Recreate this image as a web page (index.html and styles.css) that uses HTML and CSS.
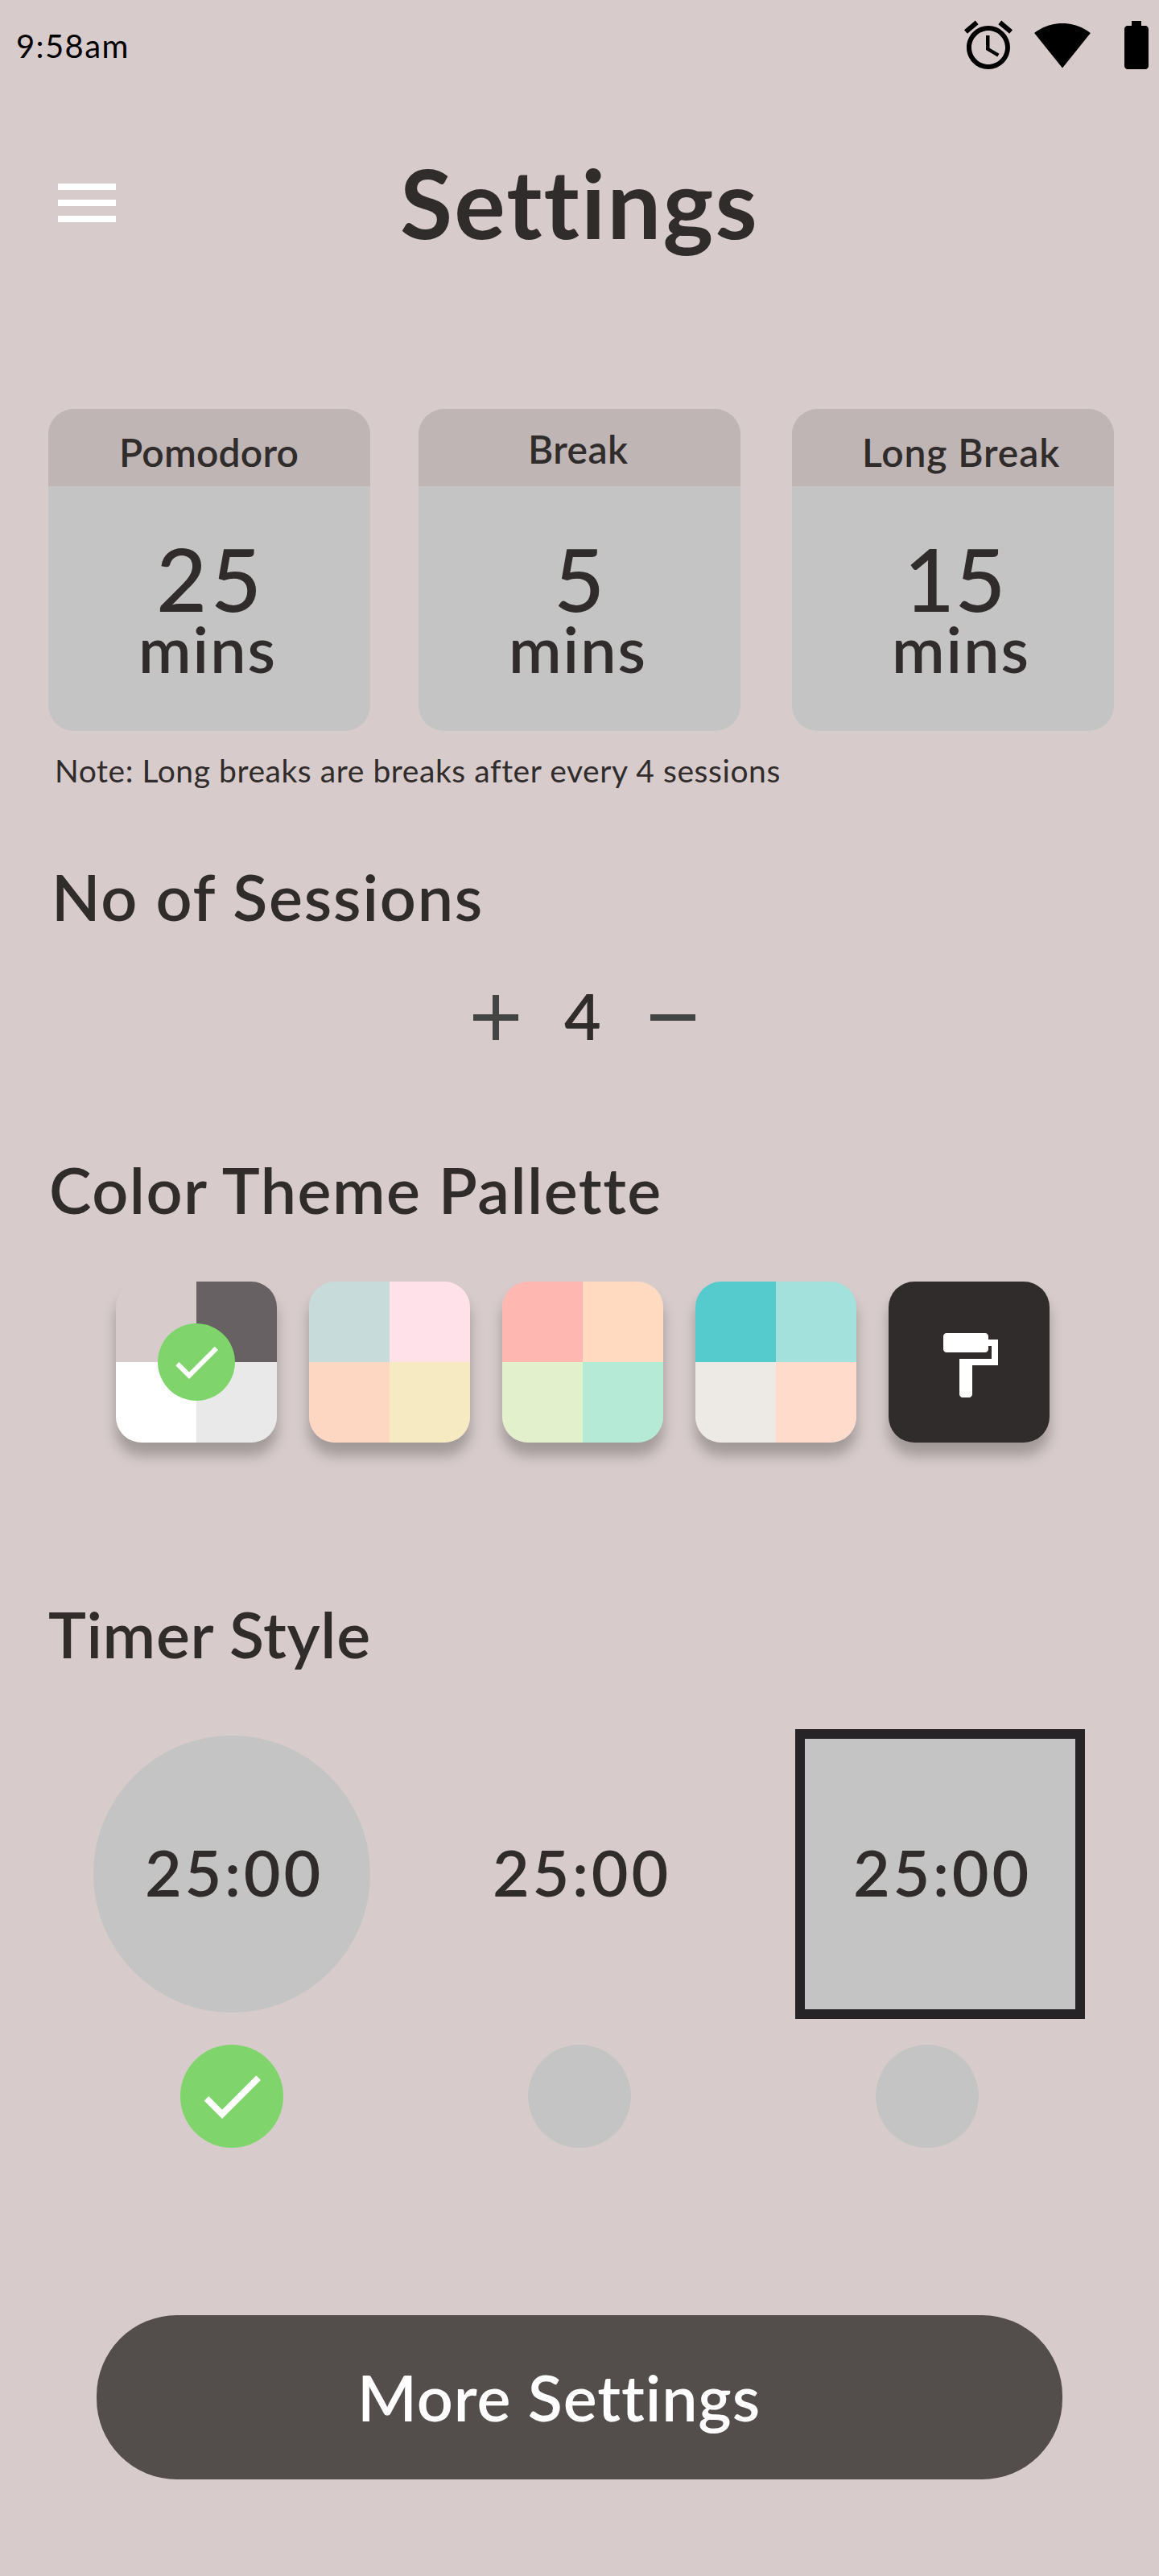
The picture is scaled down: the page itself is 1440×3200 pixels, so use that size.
FILE: index.html
```html
<!DOCTYPE html>
<html lang="en">
<head>
<meta charset="utf-8">
<title>Settings</title>
<link rel="stylesheet" href="styles.css">
</head>
<body>
<div class="screen">
  <div class="status-bar">
    <span class="status-time">9:58am</span>
    <div class="status-icons">
      <svg width="72" height="72" viewBox="0 0 24 24"><path d="M22 5.72l-4.6-3.86-1.29 1.53 4.6 3.86L22 5.72zM7.88 3.39L6.6 1.86 2 5.71l1.29 1.53 4.59-3.85zM12.5 8H11v6l4.75 2.85.75-1.23-4-2.37V8zM12 4c-4.97 0-9 4.03-9 9s4.02 9 9 9a9 9 0 0 0 0-18zm0 16c-3.87 0-7-3.13-7-7s3.13-7 7-7 7 3.13 7 7-3.13 7-7 7z"/></svg>
      <svg width="72" height="72" viewBox="0 0 24 24"><path d="M12.01 21.49L23.64 7c-.45-.34-4.93-4-11.64-4C5.28 3 .81 6.66.36 7l11.63 14.49.01.01.01-.01z"/></svg>
      <svg width="60" height="72" viewBox="0 0 20 24"><path d="M15.67 4H14V2h-4v2H8.33C7.6 4 7 4.6 7 5.33v15.33C7 21.4 7.6 22 8.33 22h7.33c.74 0 1.34-.6 1.34-1.33V5.33C17 4.6 16.4 4 15.67 4z"/></svg>
    </div>
  </div>

  <header class="header">
    <svg class="menu" width="72" height="48" viewBox="0 0 72 48"><path fill="#fff" d="M0 0h72v8H0zM0 20h72v8H0zM0 40h72v8H0z"/></svg>
    <h1 class="title">Settings</h1>
  </header>

  <section class="durations">
    <article class="card card-pomodoro">
      <div class="card-head">Pomodoro</div>
      <div class="card-value">25</div>
      <div class="card-unit">mins</div>
    </article>
    <article class="card card-break">
      <div class="card-head">Break</div>
      <div class="card-value">5</div>
      <div class="card-unit">mins</div>
    </article>
    <article class="card card-long">
      <div class="card-head">Long Break</div>
      <div class="card-value">15</div>
      <div class="card-unit">mins</div>
    </article>
  </section>
  <p class="note">Note: Long breaks are breaks after every 4 sessions</p>

  <h2 class="heading heading-sessions">No of Sessions</h2>
  <div class="counter">
    <svg class="counter-icon" width="56" height="56" viewBox="0 0 56 56"><path fill="#434545" d="M24 0h8v24h24v8H32v24h-8V32H0v-8h24z"/></svg>
    <span class="counter-value">4</span>
    <svg class="counter-icon" width="56" height="56" viewBox="0 0 56 56"><path fill="#434545" d="M0 24h56v8H0z"/></svg>
  </div>

  <h2 class="heading heading-palette">Color Theme Pallette</h2>
  <div class="palettes">
    <div class="palette">
      <i class="c-rose"></i><i class="c-slate"></i><i class="c-white"></i><i class="c-mist"></i>
      <span class="palette-check"><svg width="72" height="72" viewBox="0 0 24 24"><path fill="#fff" d="M9 16.17L4.83 12l-1.42 1.41L9 19 21 7l-1.41-1.41z"/></svg></span>
    </div>
    <div class="palette"><i class="c-ice"></i><i class="c-pink"></i><i class="c-apricot"></i><i class="c-butter"></i></div>
    <div class="palette"><i class="c-coral"></i><i class="c-peach"></i><i class="c-lime"></i><i class="c-mint"></i></div>
    <div class="palette"><i class="c-teal"></i><i class="c-aqua"></i><i class="c-bone"></i><i class="c-blush"></i></div>
    <div class="palette palette-custom">
      <svg width="96" height="96" viewBox="0 0 24 24"><path fill="#fff" d="M18 4V3c0-.55-.45-1-1-1H5c-.55 0-1 .45-1 1v4c0 .55.45 1 1 1h12c.55 0 1-.45 1-1V6h1v4H9v11c0 .55.45 1 1 1h2c.55 0 1-.45 1-1v-9h8V4h-3z"/></svg>
    </div>
  </div>

  <h2 class="heading heading-timer">Timer Style</h2>
  <div class="timers">
    <div class="timer">
      <div class="face face-round">25:00</div>
      <span class="radio radio-on"><svg width="96" height="96" viewBox="0 0 24 24"><path fill="#fff" d="M9 16.17L4.83 12l-1.42 1.41L9 19 21 7l-1.41-1.41z"/></svg></span>
    </div>
    <div class="timer">
      <div class="face">25:00</div>
      <span class="radio"></span>
    </div>
    <div class="timer">
      <div class="face face-square">25:00</div>
      <span class="radio"></span>
    </div>
  </div>

  <button class="more" type="button">More Settings</button>
</div>
</body>
</html>
```
FILE: styles.css
```css
* { box-sizing: border-box; }

body {
  margin: 0;
  background: #d7cbcb;
  color: #312c2c;
  font-family: Lato, "Open Sans", sans-serif;
  font-weight: 600;
}

h1, h2, p { margin: 0; }
svg { display: block; flex: none; }

.screen {
  display: flex;
  flex-direction: column;
  width: 1440px;
  height: 3200px;
}

/* Status bar */
.status-bar {
  display: flex;
  justify-content: space-between;
  height: 112px;
  padding: 20px 4px 0 20px;
  color: #000;
}
.status-time {
  margin-top: 13px;
  font-size: 40px;
  font-weight: 400;
  line-height: 48px;
  letter-spacing: 1.4px;
}
.status-icons { display: flex; gap: 20px; }

/* Header */
.header {
  display: flex;
  align-items: center;
  gap: 353px;
  height: 144px;
  margin-top: 67px;
  padding-left: 72px;
}
.menu { margin-top: 2px; }
.title {
  font-size: 119px;
  font-weight: 700;
  line-height: 144px;
  letter-spacing: 2.1px;
}

/* Duration cards */
.durations {
  display: flex;
  gap: 60px;
  margin: 185px 0 0 60px;
}
.card {
  width: 400px;
  height: 400px;
  border-radius: 32px;
  background: #c4c4c4;
  overflow: hidden;
}
.card-head {
  height: 96px;
  padding-top: 26px;
  background: #bfb5b4;
  font-size: 48px;
  line-height: 56px;
}
.card-value {
  margin-top: 64px;
  font-size: 109px;
  font-weight: 500;
  line-height: 100px;
}
.card-unit {
  font-size: 79px;
  line-height: 76px;
  letter-spacing: 2px;
}
.card-pomodoro .card-head { padding-left: 88px; letter-spacing: 0.2px; }
.card-pomodoro .card-value { padding-left: 134px; letter-spacing: 4.5px; }
.card-pomodoro .card-unit { padding-left: 112px; }
.card-break .card-head { padding: 22px 0 0 136px; letter-spacing: 0.4px; }
.card-break .card-value { padding-left: 168px; }
.card-break .card-unit { padding-left: 112px; }
.card-long { margin-left: 4px; }
.card-long .card-head { padding-left: 87px; letter-spacing: 0.9px; }
.card-long .card-value { padding-left: 139px; }
.card-long .card-unit { padding-left: 124px; }

.note {
  margin: 25px 0 0 68px;
  font-size: 39px;
  font-weight: 400;
  line-height: 48px;
  letter-spacing: 0.56px;
}

/* Section headings */
.heading {
  font-size: 79px;
  font-weight: 600;
  line-height: 96px;
}
.heading-sessions { margin: 85px 0 0 64px; letter-spacing: 1.8px; }
.heading-palette { margin: 120px 0 0 61px; letter-spacing: 1.5px; }
.heading-timer { margin: 190px 0 0 60px; letter-spacing: 0.65px; }

/* Session counter */
.counter {
  display: flex;
  align-items: center;
  height: 96px;
  margin: 52px 0 0 588px;
}
.counter-icon { margin-top: 4px; }
.counter-value {
  width: 164px;
  padding-left: 57px;
  font-size: 79px;
  line-height: 96px;
}

/* Theme palettes */
.palettes {
  display: flex;
  gap: 40px;
  margin: 66px 0 0 144px;
}
.palette {
  position: relative;
  display: grid;
  grid-template-columns: 100px 100px;
  grid-template-rows: 100px 100px;
  width: 200px;
  height: 200px;
  border-radius: 32px;
  box-shadow: 0 16px 16px rgba(0, 0, 0, 0.25);
}
.palette i:nth-child(1) { border-top-left-radius: 32px; }
.palette i:nth-child(2) { border-top-right-radius: 32px; }
.palette i:nth-child(3) { border-bottom-left-radius: 32px; }
.palette i:nth-child(4) { border-bottom-right-radius: 32px; }
.palette-check {
  position: absolute;
  top: 52px;
  left: 52px;
  display: grid;
  place-items: center;
  width: 96px;
  height: 96px;
  border-radius: 50%;
  background: #7fd56b;
}
.palette-custom {
  grid-template: 1fr / 1fr;
  place-items: center;
  padding-top: 8px;
  background: #312c2c;
}
.c-rose { background: #d7cbcb; }
.c-slate { background: #686163; }
.c-white { background: #fff; }
.c-mist { background: #e9e9e9; }
.c-ice { background: #c7dbda; }
.c-pink { background: #ffe1e9; }
.c-apricot { background: #fdd7c2; }
.c-butter { background: #f6eac2; }
.c-coral { background: #ffb7b2; }
.c-peach { background: #ffdac1; }
.c-lime { background: #e2f0cb; }
.c-mint { background: #b5ead7; }
.c-teal { background: #55cbcd; }
.c-aqua { background: #a3e1dc; }
.c-bone { background: #edeae5; }
.c-blush { background: #ffdbcc; }

/* Timer styles */
.timers {
  display: grid;
  grid-template-columns: repeat(3, 432px);
  margin: 70px 0 0 72px;
}
.timer {
  display: flex;
  flex-direction: column;
  align-items: center;
}
.face {
  display: flex;
  align-items: center;
  justify-content: center;
  width: 344px;
  height: 344px;
  margin: 8px 0;
  padding: 0 0 4px 6px;
  font-size: 79px;
  line-height: 96px;
  letter-spacing: 3.7px;
}
.face-round { border-radius: 50%; background: #c4c4c4; }
.face-square {
  width: 360px;
  height: 360px;
  margin: 0 0 0 32px;
  border: 12px solid #272427;
  background: #c4c4c4;
}
.radio {
  display: grid;
  place-items: center;
  width: 128px;
  height: 128px;
  margin-top: 32px;
  border-radius: 50%;
  background: #c4c4c4;
}
.radio-on { background: #7fd56b; }

/* Footer button */
.more {
  width: 1200px;
  height: 204px;
  margin: 208px 0 0 120px;
  padding: 0 0 0 324px;
  border: 0;
  border-radius: 100px;
  background: #534d4c;
  color: #fff;
  font: 600 79px/96px Lato, "Open Sans", sans-serif;
  letter-spacing: 0.9px;
  text-align: left;
}
```
